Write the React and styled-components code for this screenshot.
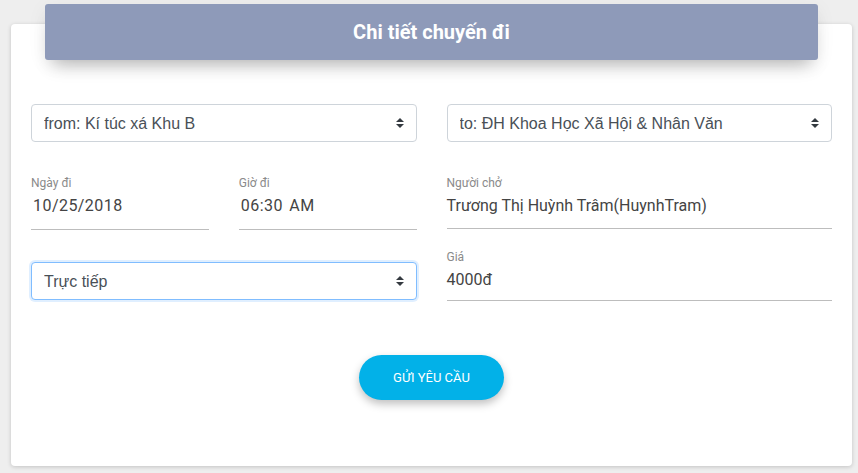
import React from "react";
import styled, { createGlobalStyle } from "styled-components";

const Global = createGlobalStyle`
  html, body { margin: 0; padding: 0; background: #eeeeee; }
  body { font-family: Roboto, "Noto Sans", Arial, sans-serif; }
  * { box-sizing: border-box; }
`;

const Page = styled.div`
  padding: 24px 6px 7px 11px;
`;

const Card = styled.div`
  background: #fff;
  border-radius: 4px;
  box-shadow: 0 1px 4px rgba(0, 0, 0, 0.18);
  padding: 0 20px 66px;
  display: flex;
  flex-direction: column;
`;

const Header = styled.div`
  margin: -20px 14px 0;
  height: 56px;
  background: #8e9ab9;
  border-radius: 3px;
  box-shadow: 0 12px 18px -8px rgba(0, 0, 0, 0.28), 0 4px 20px rgba(0, 0, 0, 0.06);
  display: flex;
  align-items: center;
  justify-content: center;
  color: #fff;
  font-family: Roboto, sans-serif;
  font-weight: 700;
  font-size: 20px;
`;

const Grid = styled.div`
  margin-top: 44px;
  display: grid;
  grid-template-columns: 1fr 1fr;
  column-gap: 30px;
  row-gap: 34px;
`;

const Column = styled.div`
  display: flex;
  flex-direction: column;
  gap: ${(p) => p.$gap}px;
`;

const Pair = styled.div`
  display: grid;
  grid-template-columns: 1fr 1fr;
  column-gap: 30px;
`;

const SelectWrap = styled.div`
  position: relative;
  height: 38px;
`;

const Select = styled.select`
  appearance: none;
  -webkit-appearance: none;
  width: 100%;
  height: 38px;
  padding: 0 28px 0 12px;
  border: 1px solid ${(p) => (p.$focused ? "#80bdff" : "#ced4da")};
  border-radius: 4px;
  box-shadow: ${(p) => (p.$focused ? "0 0 0 2px rgba(0, 123, 255, 0.12)" : "none")};
  background: #fff;
  color: #495057;
  font-family: "Liberation Sans", Arial, sans-serif;
  font-size: 16px;
  outline: none;
`;

const Caret = styled.svg`
  position: absolute;
  right: 13px;
  top: 14px;
  width: 8px;
  height: 10px;
  pointer-events: none;
`;

const Field = styled.div`
  display: flex;
  flex-direction: column;
  border-bottom: 1px solid #bdbdbd;
  padding-bottom: ${(p) => p.$pb}px;
`;

const Label = styled.div`
  font-family: Roboto, sans-serif;
  font-size: 12px;
  line-height: 14px;
  color: #8a8a8a;
`;

const Value = styled.div`
  margin-top: 6px;
  font-family: Roboto, sans-serif;
  font-size: 16px;
  line-height: 20px;
  color: #444;
  padding-left: ${(p) => (p.$spaced ? 2 : 0)}px;
  letter-spacing: ${(p) => (p.$spaced ? 0.45 : 0)}px;
  word-spacing: ${(p) => (p.$spaced ? 2 : 0)}px;
`;

const Actions = styled.div`
  margin-top: 54px;
  display: flex;
  justify-content: center;
`;

const Button = styled.button`
  width: 145px;
  height: 45px;
  border: none;
  border-radius: 23px;
  background: #02b1e8;
  color: #fff;
  font-family: Roboto, sans-serif;
  font-size: 13px;
  text-transform: uppercase;
  box-shadow: 0 4px 8px rgba(0, 0, 0, 0.25);
  cursor: pointer;
`;

function Dropdown({ value, focused }) {
  return (
    <SelectWrap>
      <Select $focused={focused} defaultValue={value}>
        <option>{value}</option>
      </Select>
      <Caret viewBox="0 0 4 5">
        <path fill="#343a40" d="M2 0L0 2h4zm0 5L0 3h4z" />
      </Caret>
    </SelectWrap>
  );
}

function TextField({ label, value, pb = 11, spaced }) {
  return (
    <Field $pb={pb}>
      <Label>{label}</Label>
      <Value $spaced={spaced}>{value}</Value>
    </Field>
  );
}

export default function App() {
  return (
    <Page>
      <Global />
      <Card>
        <Header>Chi tiết chuyến đi</Header>
        <Grid>
          <Dropdown value="from: Kí túc xá Khu B" />
          <Dropdown value="to: ĐH Khoa Học Xã Hội & Nhân Văn" />
          <Column $gap={32}>
            <Pair>
              <TextField label="Ngày đi" value="10/25/2018" pb={13} spaced />
              <TextField label="Giờ đi" value="06:30 AM" pb={13} spaced />
            </Pair>
            <Dropdown value="Trực tiếp" focused />
          </Column>
          <Column $gap={21}>
            <TextField label="Người chở" value="Trương Thị Huỳnh Trâm(HuynhTram)" pb={12} />
            <TextField label="Giá" value="4000đ" pb={10} />
          </Column>
        </Grid>
        <Actions>
          <Button>Gửi yêu cầu</Button>
        </Actions>
      </Card>
    </Page>
  );
}
